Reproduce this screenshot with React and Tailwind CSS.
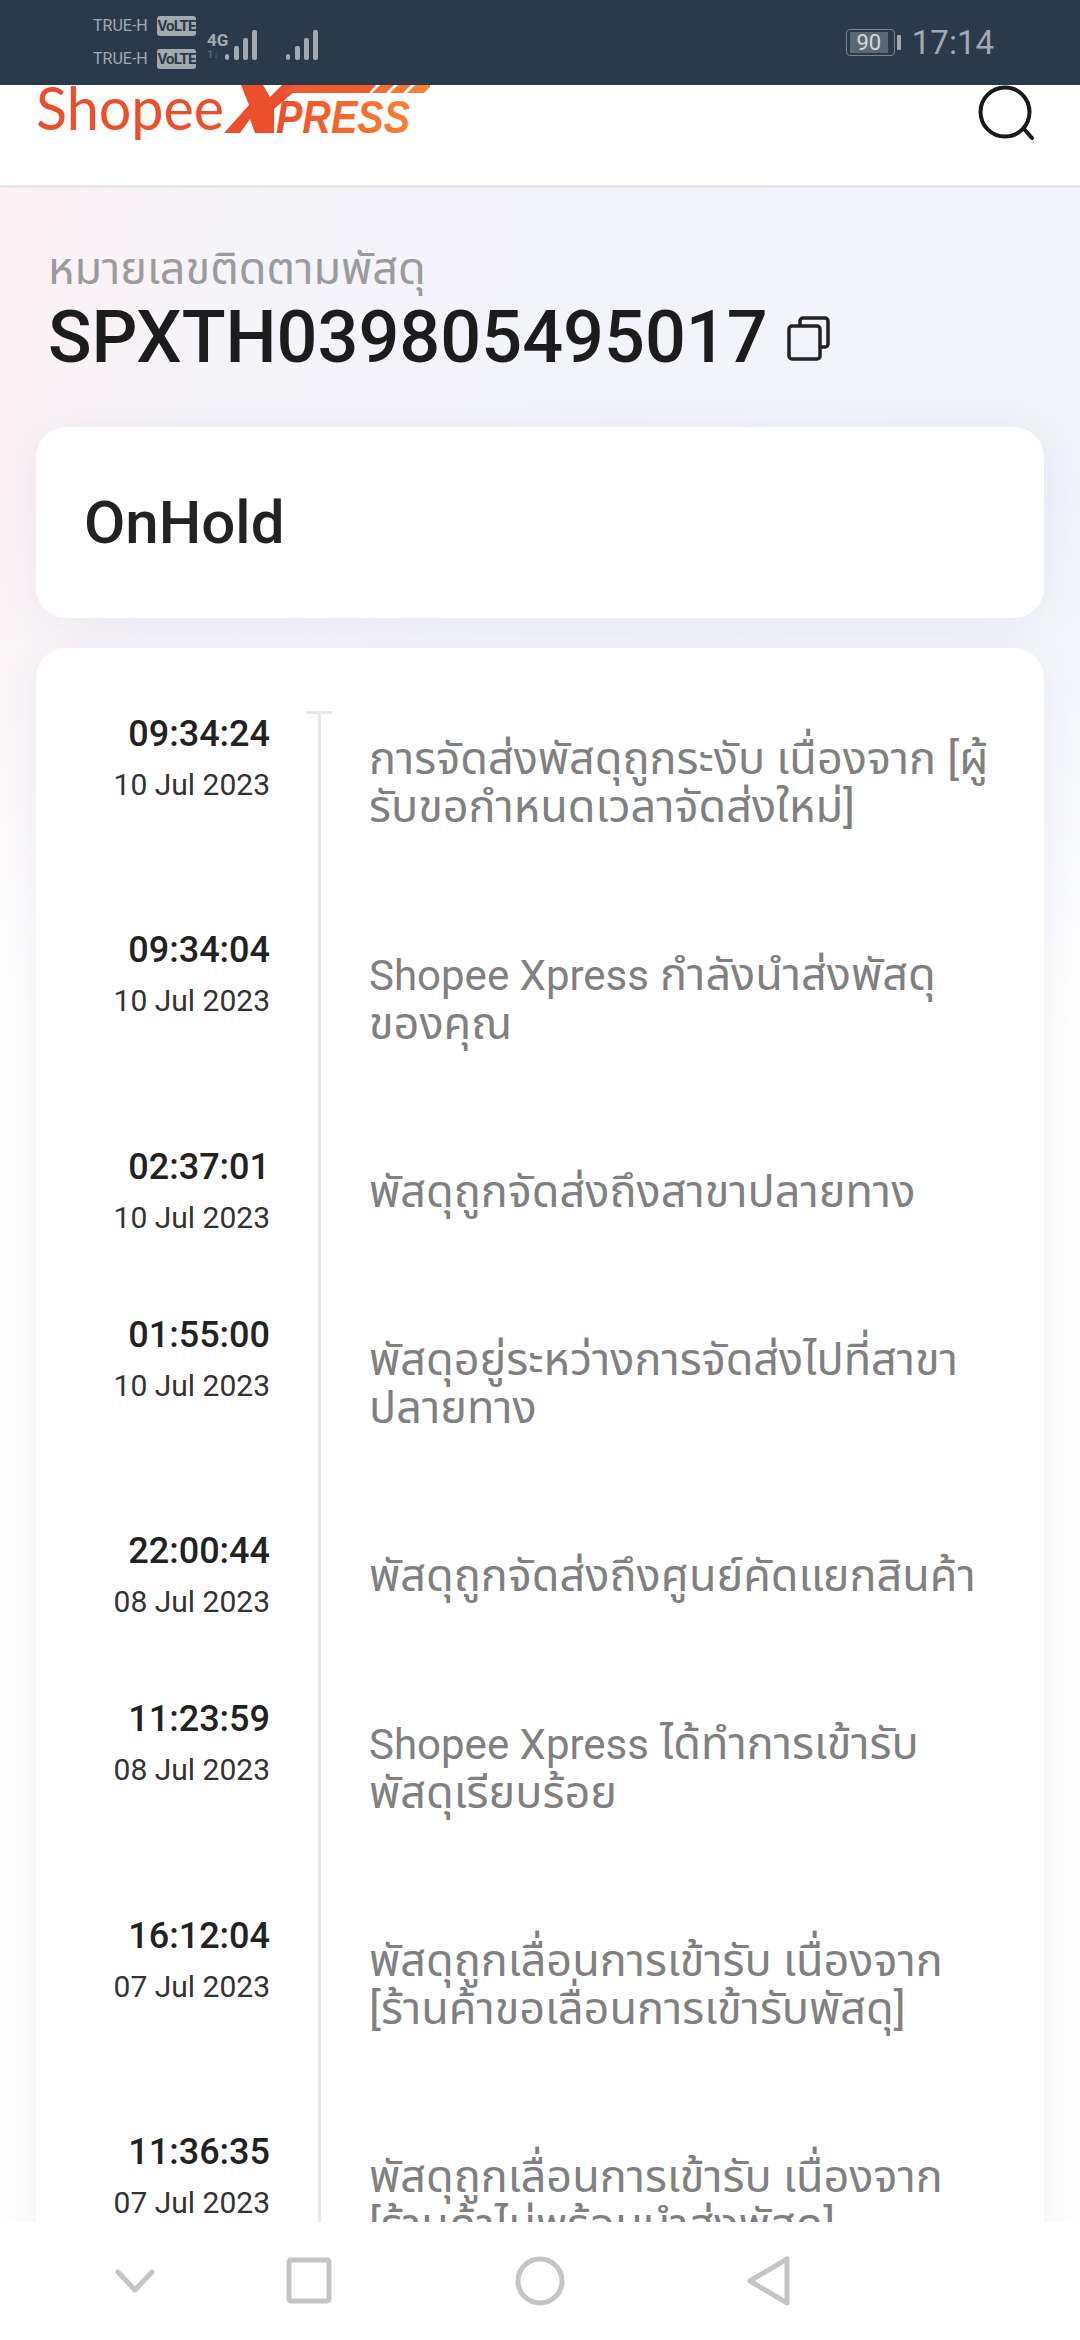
import React from 'react';

const events = [
  { time: '09:34:24', date: '10 Jul 2023', lines: ['การจัดส่งพัสดุถูกระงับ เนื่องจาก [ผู้', 'รับขอกำหนดเวลาจัดส่งใหม่]'] },
  { time: '09:34:04', date: '10 Jul 2023', lines: [<><span className="text-[42px]">Shopee Xpress</span> กำลังนำส่งพัสดุ</>, 'ของคุณ'] },
  { time: '02:37:01', date: '10 Jul 2023', lines: ['พัสดุถูกจัดส่งถึงสาขาปลายทาง'] },
  { time: '01:55:00', date: '10 Jul 2023', lines: ['พัสดุอยู่ระหว่างการจัดส่งไปที่สาขา', 'ปลายทาง'] },
  { time: '22:00:44', date: '08 Jul 2023', lines: ['พัสดุถูกจัดส่งถึงศูนย์คัดแยกสินค้า'] },
  { time: '11:23:59', date: '08 Jul 2023', lines: [<><span className="text-[42px]">Shopee Xpress</span> ได้ทำการเข้ารับ</>, 'พัสดุเรียบร้อย'] },
  { time: '16:12:04', date: '07 Jul 2023', lines: ['พัสดุถูกเลื่อนการเข้ารับ เนื่องจาก', '[ร้านค้าขอเลื่อนการเข้ารับพัสดุ]'] },
  { time: '11:36:35', date: '07 Jul 2023', lines: ['พัสดุถูกเลื่อนการเข้ารับ เนื่องจาก', '[ร้านค้าไม่พร้อมนำส่งพัสดุ]'] },
];

const SignalBars = () => (
  <svg width="32" height="31" viewBox="0 0 32 31" fill="#a3a9b1" className="block">
    <rect x="0" y="24" width="4" height="6" rx="2" />
    <rect x="9" y="16" width="5" height="14" rx="2" />
    <rect x="18" y="8" width="5" height="22" rx="2" />
    <rect x="27" y="0" width="5" height="30" rx="2" />
  </svg>
);

const VolteBadge = () => (
  <span className="w-[39px] h-[20px] bg-[#a3a9b1] rounded-[3px] text-[#2a3a4a] text-[15px] leading-[20px] font-bold text-center tracking-[-0.8px]">VoLTE</span>
);

const StatusBar = () => (
  <div className="h-[85px] shrink-0 bg-[#2a3a4a] flex items-center text-[#a3a9b1] pl-[93px] pr-[86px]" style={{ fontFamily: 'Roboto, sans-serif' }}>
    <div className="flex flex-col gap-[13px]">
      <div className="flex items-center gap-[6px] h-[20px]">
        <span className="text-[16px] leading-none w-[58px] whitespace-nowrap">TRUE-H</span>
        <VolteBadge />
      </div>
      <div className="flex items-center gap-[6px] h-[20px]">
        <span className="text-[16px] leading-none w-[58px] whitespace-nowrap">TRUE-H</span>
        <VolteBadge />
      </div>
    </div>
    <div className="ml-[11px] mt-[6px] flex items-end">
      <div className="w-[18px] flex flex-col items-start">
        <span className="text-[17px] leading-[18px] font-bold">4G</span>
        <span className="text-[11px] leading-[12px] text-[#566472] font-bold">1↓</span>
      </div>
      <SignalBars />
    </div>
    <div className="ml-[29px] mt-[6px] flex items-end">
      <SignalBars />
    </div>
    <div className="flex-1" />
    <div className="flex items-center">
      <div className="w-[49px] h-[27px] border border-[#7a8590] rounded-[4px] p-[2px]">
        <div className="w-[38px] h-[21px] bg-[#5a6875] text-[#d5d8db] text-[22px] leading-[21px] text-center ml-[1px]">90</div>
      </div>
      <div className="w-[4px] h-[15px] bg-[#a3a9b1] rounded-[1px] ml-[2px]" />
      <span className="text-[33px] leading-none ml-[11px]">17:14</span>
    </div>
  </div>
);

const Logo = () => (
  <svg width="430" height="62" viewBox="0 0 430 62" className="block">
    <defs>
      <linearGradient id="spx" x1="0" y1="0" x2="1" y2="0">
        <stop offset="0" stopColor="#ee4d2d" />
        <stop offset="1" stopColor="#f98132" />
      </linearGradient>
    </defs>
    <text x="36" y="45" fontFamily="Lato, sans-serif" fontSize="60" fill="#ec4f2b" textLength="188" lengthAdjust="spacingAndGlyphs">Shopee</text>
    <polygon points="241,0 263,0 270,12 282,0 302,0 274,24 274,48 255,48 250,34 240,48 224,48 249,20" fill="#ec4f2b" />
    <text x="276" y="48" fontFamily="'Liberation Sans', sans-serif" fontSize="46" fontWeight="700" fontStyle="italic" fill="url(#spx)" textLength="134" lengthAdjust="spacingAndGlyphs">PRESS</text>
    <polygon points="292,0 376,0 369,8 284,8" fill="#ef5a2e" />
    <polygon points="380,0 394,0 386,8 372,8" fill="#f3702f" />
    <polygon points="398,0 411,0 403,8 390,8" fill="#f57a30" />
    <polygon points="415,0 432,0 424,8 407,8" fill="#f98132" />
  </svg>
);

const Header = () => (
  <div className="h-[103px] shrink-0 bg-white border-b-[3px] border-[#e8e8e8] flex items-start justify-between pr-[42px]">
    <Logo />
    <svg width="60" height="60" viewBox="0 0 60 60" fill="none" stroke="#1a1a1a" strokeWidth="4" strokeLinecap="round" className="block">
      <circle cx="27" cy="27" r="24.5" />
      <path d="M46 44 L54 53" />
    </svg>
  </div>
);

const TrackRow = ({ item }) => (
  <div className="flex">
    <div className="w-[234px] shrink-0 pt-[25px] text-right">
      <div className="text-[36px] leading-[44px] font-medium text-[#222]">{item.time}</div>
      <div className="text-[30px] leading-[36px] mt-[11px] text-[#333]">{item.date}</div>
    </div>
    <div className="flex-1 pl-[99px] pt-[48px] pb-[72px] text-[45px] leading-[48px] text-[#808080] whitespace-nowrap">
      {item.lines.map((l, i) => (
        <div key={i}>{l}</div>
      ))}
    </div>
  </div>
);

const NavBar = () => (
  <div className="h-[118px] shrink-0 bg-white flex items-start justify-center pt-[34px]">
    <svg width="1080" height="50" viewBox="0 0 1080 50" fill="none" stroke="#c4c4c4" strokeWidth="5" strokeLinejoin="round" strokeLinecap="round">
      <path d="M118 16 L135 34 L152 16" />
      <rect x="289" y="4" width="40" height="41" rx="2" />
      <circle cx="540" cy="25" r="22" />
      <path d="M787 3 L787 47 L750 25 Z" />
    </svg>
  </div>
);

export default function App() {
  return (
    <div className="w-[1080px] h-[2340px] flex flex-col overflow-hidden" style={{ fontFamily: 'Roboto, "Noto Sans Thai", "Noto Sans", sans-serif' }}>
      <StatusBar />
      <Header />
      <div className="flex-1 min-h-0 overflow-hidden px-[36px] bg-[linear-gradient(180deg,rgba(255,255,255,0)_0px,rgba(255,255,255,0)_300px,#ffffff_850px),linear-gradient(100deg,#fdf1f4_0%,#f4f4f9_18%,#f0f3fb_100%)]">
        <div className="pt-[57px] pb-[51px] px-[12px]">
          <div className="text-[45px] leading-[48px] text-[#9b9b9b]">หมายเลขติดตามพัสดุ</div>
          <div className="flex items-center mt-[7px]">
            <span className="text-[72px] leading-[76px] font-medium text-[#1c1c1c]">SPXTH039805495017</span>
            <svg width="46" height="46" viewBox="0 0 46 46" fill="none" stroke="#222" strokeWidth="3.5" className="ml-[18px]">
              <path d="M14 10 V6 a3 3 0 0 1 3 -3 H39 a3 3 0 0 1 3 3 V29 a3 3 0 0 1 -3 3 H34" />
              <rect x="3" y="11" width="31" height="33" rx="3" />
            </svg>
          </div>
        </div>
        <div className="h-[191px] bg-white rounded-[30px] shadow-[0_6px_40px_rgba(60,70,110,0.08)] flex items-center px-[48px] text-[60px] font-medium text-[#222]">OnHold</div>
        <div className="mt-[30px] bg-white rounded-[30px] shadow-[0_6px_40px_rgba(60,70,110,0.08)] relative pt-[39px] h-[1700px]">
          <div className="absolute left-[282px] top-[63px] w-[3px] bottom-0 bg-[#e6e6e6]" />
          <div className="absolute left-[270px] top-[63px] w-[26px] h-[3px] bg-[#e6e6e6]" />
          {events.map((item, i) => (
            <TrackRow key={i} item={item} />
          ))}
        </div>
      </div>
      <NavBar />
    </div>
  );
}
